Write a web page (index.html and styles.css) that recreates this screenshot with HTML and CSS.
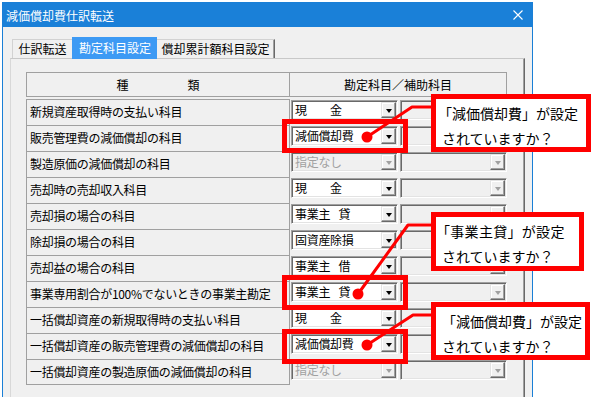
FILE: index.html
```html
<!DOCTYPE html>
<html lang="ja">
<head>
<meta charset="utf-8">
<title>減価償却費仕訳転送</title>
<link rel="stylesheet" href="styles.css">
</head>
<body>
<div class="window">
  <div class="titlebar">
    <span class="title">減価償却費仕訳転送</span>
    <svg class="close" width="10" height="10" viewBox="0 0 10 10"><path d="M0.5 0.5 L9.5 9.5 M9.5 0.5 L0.5 9.5" stroke="#fff" stroke-width="1.1" fill="none"/></svg>
  </div>
  <div class="tabs">
    <div class="tab t1">仕訳転送</div>
    <div class="tab active">勘定科目設定</div>
    <div class="tab last">償却累計額科目設定</div>
  </div>
  <div class="panel">
    <div class="head">
      <div class="h1"><span>種</span><span>類</span></div>
      <div class="h2">勘定科目／補助科目</div>
    </div>
    <div class="rows">
      <div class="lab">新規資産取得時の支払い科目</div>
      <div class="sel"><div class="combo"><span class="val">現　　金</span><span class="btn"><i class="arrow"></i></span></div><div class="combo dis wide"><span class="val"></span><span class="btn"><i class="arrow"></i></span></div></div>

      <div class="lab">販売管理費の減価償却の科目</div>
      <div class="sel"><div class="combo"><span class="val">減価償却費</span><span class="btn"><i class="arrow"></i></span></div><div class="combo dis wide"><span class="val"></span><span class="btn"><i class="arrow"></i></span></div></div>

      <div class="lab">製造原価の減価償却の科目</div>
      <div class="sel"><div class="combo dis"><span class="val">指定なし</span><span class="btn"><i class="arrow"></i></span></div><div class="combo dis wide"><span class="val"></span><span class="btn"><i class="arrow"></i></span></div></div>

      <div class="lab">売却時の売却収入科目</div>
      <div class="sel"><div class="combo"><span class="val">現　　金</span><span class="btn"><i class="arrow"></i></span></div><div class="combo dis wide"><span class="val"></span><span class="btn"><i class="arrow"></i></span></div></div>

      <div class="lab">売却損の場合の科目</div>
      <div class="sel"><div class="combo"><span class="val">事業主 貸</span><span class="btn"><i class="arrow"></i></span></div><div class="combo dis wide"><span class="val"></span><span class="btn"><i class="arrow"></i></span></div></div>

      <div class="lab">除却損の場合の科目</div>
      <div class="sel"><div class="combo"><span class="val">固資産除損</span><span class="btn"><i class="arrow"></i></span></div><div class="combo dis wide"><span class="val"></span><span class="btn"><i class="arrow"></i></span></div></div>

      <div class="lab">売却益の場合の科目</div>
      <div class="sel"><div class="combo"><span class="val">事業主 借</span><span class="btn"><i class="arrow"></i></span></div><div class="combo dis wide"><span class="val"></span><span class="btn"><i class="arrow"></i></span></div></div>

      <div class="lab">事業専用割合が100%でないときの事業主勘定</div>
      <div class="sel"><div class="combo"><span class="val">事業主 貸</span><span class="btn"><i class="arrow"></i></span></div><div class="combo dis wide"><span class="val"></span><span class="btn"><i class="arrow"></i></span></div></div>

      <div class="lab">一括償却資産の新規取得時の支払い科目</div>
      <div class="sel"><div class="combo"><span class="val">現　　金</span><span class="btn"><i class="arrow"></i></span></div><div class="combo dis wide"><span class="val"></span><span class="btn"><i class="arrow"></i></span></div></div>

      <div class="lab">一括償却資産の販売管理費の減価償却の科目</div>
      <div class="sel"><div class="combo"><span class="val">減価償却費</span><span class="btn"><i class="arrow"></i></span></div><div class="combo dis wide"><span class="val"></span><span class="btn"><i class="arrow"></i></span></div></div>

      <div class="lab last">一括償却資産の製造原価の減価償却の科目</div>
      <div class="sel"><div class="combo dis"><span class="val">指定なし</span><span class="btn"><i class="arrow"></i></span></div><div class="combo dis wide"><span class="val"></span><span class="btn"><i class="arrow"></i></span></div></div>
    </div>
  </div>
</div>

<div class="overlay">
  <div class="frame f1"></div>
  <div class="frame f2"></div>
  <div class="frame f3"></div>
  <svg class="leaders" width="602" height="397" viewBox="0 0 602 397">
    <g stroke="#ff0000" stroke-width="3" fill="none" stroke-linejoin="round" stroke-linecap="round">
      <polyline points="367,137 412,107 434,107"/>
      <polyline points="358,294 408,225 434,225"/>
      <polyline points="367,345 413,315 434,315"/>
    </g>
    <g fill="#ff0000">
      <circle cx="367" cy="137" r="5.5"/>
      <circle cx="358" cy="294" r="5.5"/>
      <circle cx="367" cy="345" r="5.5"/>
    </g>
  </svg>
  <div class="callout c1"><p class="l1">「減価償却費」が設定</p><p>されていますか？</p></div>
  <div class="callout c2"><p class="l1">「事業主貸」が設定</p><p>されていますか？</p></div>
  <div class="callout c3"><p class="l1">「減価償却費」が設定</p><p>されていますか？</p></div>
</div>
</body>
</html>
```
FILE: styles.css
```css
* { box-sizing: border-box; }

body {
  margin: 0;
  width: 602px;
  height: 397px;
  overflow: hidden;
  position: relative;
  background: #ffffff;
  font-family: "Noto Sans CJK JP", "Noto Sans", sans-serif;
  font-size: 12px;
  color: #000;
}

.window {
  margin: 2px 0 0 2px;
  width: 531px;
  height: 395px;
  border: 1px solid #1a7fd6;
  border-bottom: 0;
  background: #f0f0f0;
  display: flex;
  flex-direction: column;
}

.titlebar {
  height: 24px;
  flex: none;
  background: #1a80d8;
  color: #fff;
  display: flex;
  align-items: center;
  justify-content: space-between;
  padding: 0 9px 0 3px;
}
.title { letter-spacing: 0; }
.close { display: block; }

.tabs {
  display: flex;
  align-items: flex-end;
  height: 21px;
  margin: 10px 0 0 9px;
  flex: none;
}
.tab {
  height: 19px;
  line-height: 17px;
  text-align: center;
  border-top: 1px solid #d2d2d2;
  border-left: 1px solid #d2d2d2;
  background: #f0f0f0;
}
.tab.t1 { width: 60px; }
.tab.active {
  width: 85px;
  height: 22px;
  line-height: 20px;
  margin-bottom: -1px;
  position: relative;
  background: #3d9af4;
  border-color: #3d9af4;
  color: #fff;
}
.tab.last {
  width: 118px;
  border-right: 1px solid #696969;
  box-shadow: inset -1px 0 #a0a0a0;
  border-left: 0;
}

.panel {
  flex: 1;
  margin-left: 7px;
  width: 515px;
  border-top: 1px solid #c8c8c8;
  border-left: 1px solid #d8d8d8;
  border-right: 1px solid #696969;
  box-shadow: inset -1px 0 #a0a0a0;
  padding: 13px 0 0 15px;
}

.head {
  display: grid;
  grid-template-columns: 263px 218px;
  height: 25px;
}
.h1, .h2 {
  border: 1px solid #a0a0a0;
  display: flex;
  align-items: center;
  justify-content: center;
}
.h1 { border-right: 0; gap: 59px; }

.rows {
  margin-top: 2px;
  display: grid;
  grid-template-columns: 263px 218px;
  grid-auto-rows: 26px;
}
.lab {
  border-top: 1px solid #a0a0a0;
  border-left: 1px solid #a0a0a0;
  padding-left: 3px;
  line-height: 24px;
  letter-spacing: -0.3px;
  white-space: nowrap;
}
.lab.last { border-bottom: 1px solid #a0a0a0; }
.sel {
  border-left: 1px solid #a0a0a0;
  padding: 1px 0 0 1px;
  display: flex;
  gap: 2px;
  align-items: flex-start;
}

.combo {
  width: 107px;
  height: 20px;
  display: flex;
  border: 1px solid;
  border-color: #a0a0a0 #ffffff #ffffff #a0a0a0;
  box-shadow: inset 1px 1px #696969, inset -1px -1px #e3e3e3;
  background: #ffffff;
  padding: 1px;
}
.val {
  flex: 1;
  padding-left: 2px;
  line-height: 16px;
  white-space: pre;
  overflow: hidden;
  letter-spacing: -0.3px;
  word-spacing: 6px;
}
.btn {
  width: 15px;
  height: 16px;
  flex: none;
  background: #f0f0f0;
  border: 1px solid;
  border-color: #e3e3e3 #696969 #696969 #e3e3e3;
  box-shadow: inset -1px -1px #a0a0a0, inset 1px 1px #ffffff;
  display: flex;
  align-items: center;
  justify-content: center;
}
.arrow {
  display: block;
  width: 1px;
  height: 0;
  border-left: 3px solid transparent;
  border-right: 3px solid transparent;
  border-top: 4px solid #000;
  margin-top: 1px;
}
.combo.dis { background: #f0f0f0; }
.combo.dis .val { color: #a0a0a0; }
.combo.dis .arrow { border-top-color: #a0a0a0; }

/* annotation overlay */
.overlay {
  position: absolute;
  left: 0;
  top: 0;
  width: 602px;
  height: 397px;
  pointer-events: none;
}
.frame {
  position: absolute;
  left: 282px;
  width: 126px;
  border: 5px solid #ff0000;
}
.frame.f1 { top: 119px; height: 34px; }
.frame.f2 { top: 275px; height: 35px; }
.frame.f3 { top: 329px; height: 35px; }

.leaders { position: absolute; left: 0; top: 0; }

.callout {
  position: absolute;
  left: 431px;
  background: #ffffff;
  border: 5px solid #ff0000;
  padding: 2px 0 0 6px;
  font-size: 14px;
  line-height: 25px;
  white-space: nowrap;
}
.callout p { margin: 0; }
.callout.c1 { top: 94px; width: 160px; height: 58px; }
.callout.c1 .l1 { text-indent: -4px; }
.callout.c2 { top: 212px; width: 153px; height: 59px; }
.callout.c2 .l1 { text-indent: -6px; letter-spacing: 0.3px; }
.callout.c3 { top: 302px; width: 159px; height: 58px; }
```
